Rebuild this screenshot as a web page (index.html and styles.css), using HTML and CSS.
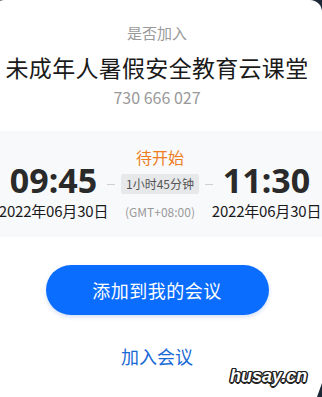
FILE: index.html
```html
<!DOCTYPE html>
<html lang="zh">
<head>
<meta charset="utf-8">
<link rel="stylesheet" href="styles.css">
</head>
<body>
<div class="card">
  <div class="label">是否加入</div>
  <div class="title">未成年人暑假安全教育云课堂</div>
  <div class="number">730 666 027</div>
  <div class="band">
    <div class="side">
      <div class="time">09:45</div>
      <div class="date">2022年06月30日</div>
    </div>
    <div class="mid">
      <div class="status">待开始</div>
      <div class="dur-row">
        <span class="dash"></span>
        <span class="chip">1小时45分钟</span>
        <span class="dash"></span>
      </div>
      <div class="tz">(GMT+08:00)</div>
    </div>
    <div class="side">
      <div class="time">11:30</div>
      <div class="date">2022年06月30日</div>
    </div>
  </div>
  <div class="btn">添加到我的会议</div>
  <div class="link">加入会议</div>
</div>
<div class="edge"></div>
<div class="mark">husay.cn</div>
</body>
</html>
```
FILE: styles.css
```css
html, body {
  margin: 0;
  padding: 0;
  height: 100%;
  overflow: hidden;
}
body {
  background: #1d2837;
  font-family: "Noto Sans CJK SC", "Noto Sans", sans-serif;
  position: relative;
}
.card {
  margin-left: -8px;
  width: 330px;
  height: 397px;
  background: #ffffff;
  border-radius: 12px 12px 0 0;
  display: flex;
  flex-direction: column;
  align-items: center;
  padding-top: 23px;
  box-sizing: border-box;
}
.label {
  font-size: 15px;
  line-height: 20px;
  color: #9a9a9a;
}
.title {
  margin-top: 9px;
  font-size: 23px;
  line-height: 30px;
  color: #1a1a1a;
  white-space: nowrap;
  letter-spacing: 0.3px;
}
.number {
  margin-top: 4px;
  font-size: 16px;
  line-height: 22px;
  color: #999999;
}
.band {
  margin-top: 23px;
  align-self: stretch;
  height: 106px;
  background: #f8f9fb;
  display: flex;
  justify-content: space-between;
  padding: 0 5px 0 8px;
  box-sizing: border-box;
}
.side {
  padding-top: 32px;
  display: flex;
  flex-direction: column;
  align-items: center;
  width: 107px;
}
.time {
  font-family: "Noto Sans", sans-serif;
  font-weight: 700;
  font-size: 34px;
  line-height: 34px;
  height: 34px;
  color: #2a2a2a;
}
.date {
  margin-top: 4px;
  font-size: 15px;
  line-height: 20px;
  color: #1a1a1a;
  white-space: nowrap;
  letter-spacing: -0.2px;
}
.mid {
  padding-top: 15px;
  display: flex;
  flex-direction: column;
  align-items: center;
}
.status {
  font-size: 16px;
  line-height: 22px;
  color: #ee7d22;
}
.dur-row {
  margin-top: 6px;
  display: flex;
  align-items: center;
  gap: 6px;
}
.dash {
  width: 8px;
  height: 1px;
  background: #cfcfcf;
}
.chip {
  height: 20px;
  line-height: 20px;
  padding: 0 5px;
  background: #e7e8ea;
  border-radius: 3px;
  font-size: 12px;
  color: #555555;
  white-space: nowrap;
}
.tz {
  margin-top: 9px;
  font-size: 12px;
  line-height: 18px;
  color: #9a9a9a;
}
.btn {
  margin-top: 28px;
  width: 223px;
  height: 50px;
  border-radius: 25px;
  background: #0a6dfe;
  box-shadow: 0 2px 4px rgba(10, 80, 200, 0.18);
  color: #ffffff;
  font-size: 18px;
  line-height: 50px;
  text-align: center;
  letter-spacing: 0.5px;
}
.link {
  margin-top: 29px;
  font-size: 18px;
  line-height: 24px;
  color: #1769d6;
}
.edge {
  position: absolute;
  right: 0;
  bottom: 0;
  width: 5px;
  height: 14px;
  background: #1d2837;
  clip-path: polygon(100% 0, 100% 100%, 0 100%);
}
.mark {
  position: absolute;
  left: 230px;
  top: 364px;
  font-family: "Liberation Sans", sans-serif;
  font-style: italic;
  font-weight: 700;
  font-size: 18px;
  line-height: 24px;
  color: #ffffff;
  text-shadow: -1px -1px 0 #222, 1px -1px 0 #222, -1px 1px 0 #222, 1px 1px 0 #222, 0 1.5px 0 #222, 0 -1.5px 0 #222, 1.5px 0 0 #222, -1.5px 0 0 #222;
}
```
